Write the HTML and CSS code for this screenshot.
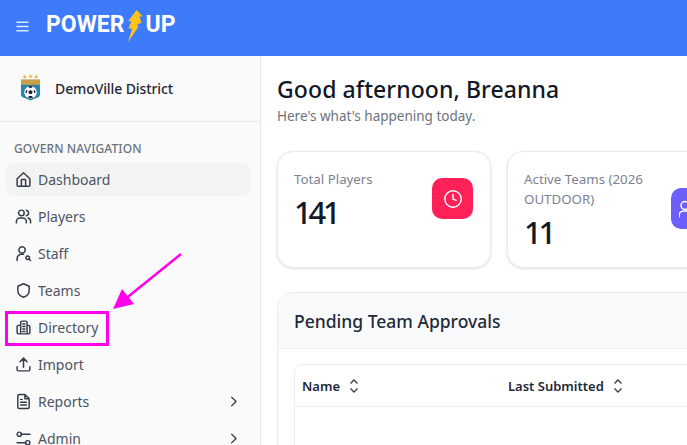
FILE: index.html
```html
<!DOCTYPE html>
<html lang="en">
<head>
<meta charset="utf-8">
<title>Power Up</title>
<link rel="stylesheet" href="styles.css">
</head>
<body>
<header class="topbar">
  <svg class="menu-icon" viewBox="0 0 16 16"><path d="M1.500 3.500h13M1.500 8h13M1.500 12.500h13"/></svg>
  <div class="logo"><span>POWER</span><svg class="bolt" viewBox="0 0 16 32"><path d="M9.500 0 16 6.500 12.500 6.500 14.500 13 10.500 14 11 17.500 1 32 5 19 1.500 18 4.500 11 1 11.500z"/></svg><span>UP</span></div>
</header>
<div class="layout">
  <aside class="sidebar">
    <div class="org">
      <svg class="crest" viewBox="0 0 22 28">
        <path class="star" d="M5 .5l.7 1.500 1.500.2-1.100 1 .3 1.500L5 4l-1.400.7.3-1.500-1.100-1 1.500-.2zM11 0l.7 1.500 1.500.2-1.100 1 .3 1.500-1.400-.7-1.400.7.3-1.500-1.100-1 1.500-.2zM17 .5l.7 1.500 1.500.2-1.100 1 .3 1.500L17 4l-1.400.7.3-1.500-1.100-1 1.500-.2z"/>
        <path class="shield-top" d="M1 5.500h20v6H1z"/>
        <path class="shield" d="M1 11h20v10q0 3-4 4l-6 2.500L5 25q-4-1-4-4z"/>
        <circle class="ball" cx="11" cy="19" r="6.500"/>
        <path class="patch" d="M11 16.500l2.300 1.700-.9 2.700H9.600l-.9-2.700zM8.500 13.500l2.500 1.200 2.500-1.200-1-1h-3zM5.500 19l1.200-2.500 1 .5-.5 3zM16.500 19l-1.200-2.500-1 .5.500 3zM8.500 25l.8-2h3.400l.8 2z"/>
      </svg>
      <span class="org-name">DemoVille District</span>
    </div>
    <div class="nav-title">GOVERN NAVIGATION</div>
    <nav class="nav">
      <a class="nav-item active"><svg viewBox="0 0 24 24"><path d="M3 11 12 2.500 21 11v9a1.500 1.500 0 0 1-1.500 1.500h-15A1.500 1.500 0 0 1 3 20z"/><path d="M9 21.500V13a1 1 0 0 1 1-1h4a1 1 0 0 1 1 1v8.500"/></svg><span>Dashboard</span></a>
      <a class="nav-item"><svg viewBox="0 0 24 24"><circle cx="9" cy="7" r="4"/><path d="M2 21v-2a5 5 0 0 1 5-5h4a5 5 0 0 1 5 5v2M16 3.100a4 4 0 0 1 0 7.800M22 21v-2a5 5 0 0 0-3.500-4.800"/></svg><span>Players</span></a>
      <a class="nav-item"><svg viewBox="0 0 24 24"><circle cx="10" cy="7" r="4.500"/><path d="M3 22v-3a6 6 0 0 1 6-6h3"/><circle cx="18" cy="18" r="2.500"/><path d="m20 20 2 2"/></svg><span>Staff</span></a>
      <a class="nav-item"><svg viewBox="0 0 24 24"><path d="M12 2.500 20 6v6c0 5-3.500 8-8 9.500C7.500 20 4 17 4 12V6z"/></svg><span>Teams</span></a>
      <a class="nav-item"><svg viewBox="0 0 24 24"><path d="M8 21V5a2 2 0 0 1 2-2h5a2 2 0 0 1 2 2v16M8 9H5a2 2 0 0 0-2 2v8a2 2 0 0 0 2 2h14a2 2 0 0 0 2-2v-8a2 2 0 0 0-2-2h-2M11 7h3M11 10.500h3M11 14h3M11 17.500h3"/></svg><span>Directory</span></a>
      <a class="nav-item"><svg viewBox="0 0 24 24"><path d="M3 15v4a2 2 0 0 0 2 2h14a2 2 0 0 0 2-2v-4M12 16V3M7 8l5-5 5 5"/></svg><span>Import</span></a>
      <a class="nav-item"><svg viewBox="0 0 24 24"><path d="M14 2H6a2 2 0 0 0-2 2v16a2 2 0 0 0 2 2h12a2 2 0 0 0 2-2V8zM14 2v6h6M8 13h8M8 17h8M8 9h2"/></svg><span>Reports</span><svg class="chev" viewBox="0 0 24 24"><path d="m9 5 7 7-7 7"/></svg></a>
      <a class="nav-item"><svg viewBox="0 0 24 24"><circle cx="6" cy="6" r="3"/><path d="M9 6h12M3 18h12"/><circle cx="18" cy="18" r="3"/></svg><span>Admin</span><svg class="chev" viewBox="0 0 24 24"><path d="m9 5 7 7-7 7"/></svg></a>
    </nav>
  </aside>
  <main class="main">
    <h1 class="greeting">Good afternoon, Breanna</h1>
    <p class="sub">Here's what's happening today.</p>
    <div class="stats">
      <section class="stat">
        <div class="stat-text">
          <div class="stat-label">Total Players</div>
          <div class="stat-value">141</div>
        </div>
        <div class="stat-icon red"><svg viewBox="0 0 24 24"><circle cx="12" cy="12" r="9"/><path d="M12 7v5l3.500 1.500"/></svg></div>
      </section>
      <section class="stat wide">
        <div class="stat-text">
          <div class="stat-label">Active Teams (2026 OUTDOOR)</div>
          <div class="stat-value">11</div>
        </div>
        <div class="stat-icon purple"><svg viewBox="0 0 24 24"><circle cx="6" cy="8.500" r="4"/><path d="M0 20v-1.500a4.500 4.500 0 0 1 4.500-4.500h3a4.500 4.500 0 0 1 4.500 4.500V20M14 5a4 4 0 0 1 0 7M18 20v-1.500a4.500 4.500 0 0 0-3-4"/></svg></div>
      </section>
    </div>
    <section class="panel">
      <div class="panel-head">Pending Team Approvals</div>
      <div class="panel-body">
        <div class="table">
          <div class="table-head">
            <div class="col col-name">Name<svg class="sort" viewBox="0 0 12 16"><path d="m2.500 5.500 3.500-3.500 3.500 3.500M2.500 10.500 6 14l3.500-3.500"/></svg></div>
            <div class="col">Last Submitted<svg class="sort" viewBox="0 0 12 16"><path d="m2.500 5.500 3.500-3.500 3.500 3.500M2.500 10.500 6 14l3.500-3.500"/></svg></div>
          </div>
        </div>
      </div>
    </section>
  </main>
</div>
<div class="callout-box"></div>
<svg class="callout-arrow" viewBox="0 0 687 445"><path class="shaft" d="M181 254 124 300"/><path class="head" d="M113 309 122 289 134 304z"/></svg>
</body>
</html>
```
FILE: styles.css
```css
* { box-sizing: border-box; }
html, body { margin: 0; height: 100%; overflow: hidden; }
body { width: 687px; height: 445px; background: #fff; color: #111827; font-family: "Noto Sans", sans-serif; position: relative; }

.topbar { height: 56px; background: #3e7bfa; display: flex; align-items: flex-start; padding: 10px 0 0 15px; }
.menu-icon { width: 15px; height: 15px; margin-top: 9px; fill: none; stroke: #dbe7ff; stroke-width: 1.500; }
.logo { margin-left: 16px; display: flex; align-items: flex-start; color: #fff; font-family: "Roboto", sans-serif; font-weight: 700; font-size: 23px; line-height: 29px; }
.bolt { width: 16px; height: 32px; margin: 0 2px 0 3px; fill: #fcc419; }

.layout { display: flex; height: 389px; }
.sidebar { width: 261px; flex: none; background: #fafafa; border-right: 1px solid #e8e8e8; overflow: hidden; }
.org { height: 66px; display: flex; align-items: center; padding: 0 0 0 20px; border-bottom: 1px solid #e9e9e9; }
.crest { width: 21px; height: 27px; flex: none; margin-top: -2px; }
.star { fill: #e8b64a; }
.shield-top { fill: #c9a04a; }
.shield { fill: #2d86a8; }
.ball { fill: #fff; }
.patch { fill: #1f2937; }
.org-name { margin-left: 14px; font-size: 14px; font-weight: 500; color: #1f2937; letter-spacing: -.1px; }
.nav-title { margin: 18px 0 0 14px; height: 17px; font-size: 12px; line-height: 17px; font-weight: 500; color: #6b7280; letter-spacing: .1px; }
.nav { margin-top: 6px; padding: 0 9px 0 6px; display: flex; flex-direction: column; gap: 4px; }
.nav-item { height: 33px; flex: none; display: flex; align-items: center; padding: 0 9px; border-radius: 8px; font-size: 14px; color: #4b5563; }
.nav-item.active { background: #f3f3f3; }
.nav-item svg { width: 17px; height: 17px; flex: none; fill: none; stroke: #333c4a; stroke-width: 2.100; stroke-linecap: round; stroke-linejoin: round; margin-left: -.5px; }
.nav-item span { margin-left: 6.500px; }
.nav-item .chev { width: 15px; height: 15px; margin-left: auto; margin-right: 1px; stroke-width: 2.200; }

.main { flex: 1; min-width: 0; padding: 18px 0 0 16px; overflow: hidden; }
.greeting { margin: 0; font-size: 23px; line-height: 30px; font-weight: 500; color: #111827; white-space: nowrap; letter-spacing: .1px; }
.sub { margin: 3px 0 0; font-size: 13.500px; line-height: 18px; color: #6b7280; }
.stats { display: flex; gap: 16px; margin-top: 26px; width: 520px; }
.stat { width: 214px; height: 117px; flex: none; display: flex; justify-content: space-between; align-items: flex-start; padding: 17px 17px 0 16px; background: #fff; border: 1px solid #eaeaea; border-radius: 16px; box-shadow: 0 1px 3px rgba(0,0,0,.12); }
.stat.wide { width: 280px; padding-right: 0; justify-content: flex-start; }
.stat-text { width: 140px; }
.stat.wide .stat-text { width: 147px; }
.stat-label { font-size: 13.300px; line-height: 20px; color: #7b8391; }
.stat-value { margin-top: 5px; font-size: 31px; line-height: 36px; font-weight: 500; color: #111827; letter-spacing: -3.200px; }
.stat-icon { width: 41px; height: 41px; flex: none; margin-top: 9px; border-radius: 10px; display: flex; align-items: center; justify-content: center; }
.stat-icon svg { width: 22px; height: 22px; fill: none; stroke: #fff; stroke-width: 1.500; stroke-linecap: round; stroke-linejoin: round; }
.red { background: #ff2158; }
.purple { background: #6c5ffc; margin-top: 19px; }
.stat-icon.purple { justify-content: flex-start; padding-left: 8px; }
.stat-icon.purple svg { width: 24px; height: 24px; flex: none; }
.panel { width: 480px; margin-top: 24px; height: 200px; border: 1px solid #eaeaea; border-radius: 16px; overflow: hidden; background: #fff; }
.panel-head { height: 56px; padding: 0 16px; display: flex; align-items: center; background: #f9fafb; border-bottom: 1px solid #eeeeee; font-size: 17.500px; font-weight: 500; color: #1f2937; }
.panel-body { padding: 15px 0 0 16px; }
.table { height: 120px; border: 1px solid #eeeeee; border-radius: 8px 0 0 8px; }
.table-head { height: 42px; display: flex; align-items: center; padding-left: 7px; border-bottom: 1px solid #eeeeee; font-size: 13px; font-weight: 600; color: #1f2937; }
.col { display: flex; align-items: center; white-space: nowrap; }
.col-name { width: 206px; }
.sort { width: 12px; height: 16px; margin-left: 8px; fill: none; stroke: #374151; stroke-width: 1.400; }

.callout-box { position: absolute; left: 5px; top: 311px; width: 104px; height: 35px; border: 3px solid #ff00ea; }
.callout-arrow { position: absolute; left: 0; top: 0; width: 687px; height: 445px; pointer-events: none; }
.shaft { stroke: #ff00ea; stroke-width: 2.500; fill: none; }
.head { fill: #ff00ea; }
```
